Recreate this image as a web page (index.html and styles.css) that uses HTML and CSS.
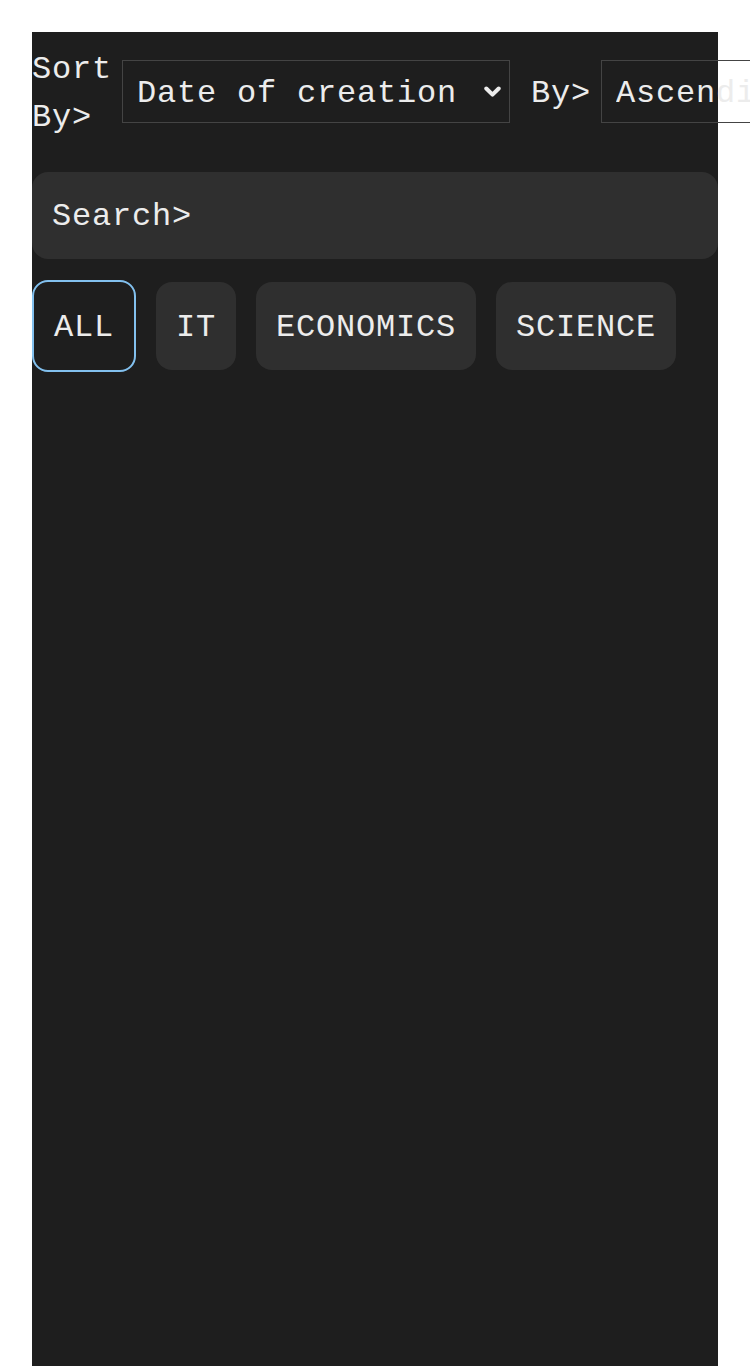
FILE: index.html
```html
<!DOCTYPE html>
<html lang="en">
<head>
<meta charset="utf-8">
<title>Notes</title>
<link rel="stylesheet" href="styles.css">
</head>
<body>
<main class="panel">
  <div class="sort-row">
    <label class="sort-label" for="sort-field">Sort By&gt;</label>
    <div class="select-box select-box--first">
      <select id="sort-field" class="select">
        <option>Date of creation</option>
        <option>Title</option>
      </select>
      <svg class="chevron" width="17" height="12" viewBox="0 0 17 12" aria-hidden="true">
        <path d="M2.3 2.5 L8.5 8.7 L14.7 2.5" fill="none" stroke="#ececec" stroke-width="4" stroke-linecap="round" stroke-linejoin="round"/>
      </svg>
    </div>
    <label class="sort-label" for="sort-order">By&gt;</label>
    <div class="select-box">
      <select id="sort-order" class="select">
        <option>Ascending</option>
        <option>Descending</option>
      </select>
      <svg class="chevron" width="17" height="12" viewBox="0 0 17 12" aria-hidden="true">
        <path d="M2.3 2.5 L8.5 8.7 L14.7 2.5" fill="none" stroke="#ececec" stroke-width="4" stroke-linecap="round" stroke-linejoin="round"/>
      </svg>
    </div>
  </div>

  <input class="search" type="text" placeholder="Search&gt;">

  <div class="chips">
    <button class="chip chip--active">ALL</button>
    <button class="chip">IT</button>
    <button class="chip">ECONOMICS</button>
    <button class="chip">SCIENCE</button>
  </div>
</main>
</body>
</html>
```

FILE: styles.css
```css
* {
  box-sizing: border-box;
}

html {
  overflow-x: hidden;
}

body {
  margin: 0;
  padding: 32px 32px 0;
  background: #ffffff;
  font-family: "Liberation Mono", "DejaVu Sans Mono", monospace;
  font-size: 32px;
  letter-spacing: 0.8px;
  color: #ececec;
}

.panel {
  background: #1e1e1e;
  min-height: calc(100vh - 32px);
  padding-top: 8px;
}

.sort-row {
  display: flex;
  align-items: center;
  gap: 10px;
}

.sort-label {
  line-height: 48px;
  padding-top: 6px;
  color: #ececec;
}

.select-box {
  display: flex;
  align-items: center;
  flex-shrink: 0;
  height: 63px;
  border: 1px solid #444444;
  padding: 0 8px 0 14px;
  gap: 26px;
}

.select-box--first {
  margin-right: 11px;
}

.select {
  appearance: none;
  -webkit-appearance: none;
  background: transparent;
  border: 0;
  outline: none;
  margin: 0;
  padding: 4px 0 0;
  font: inherit;
  letter-spacing: inherit;
  color: #ececec;
}

.chevron {
  display: block;
  flex-shrink: 0;
  margin-top: 2px;
}

.search {
  display: block;
  width: 100%;
  height: 87px;
  margin: 30px 0 0;
  padding: 2px 20px 0;
  border: 0;
  border-radius: 16px;
  background: #2f2f2f;
  font: inherit;
  letter-spacing: inherit;
  color: #ececec;
  outline: none;
}

.search::placeholder {
  color: #ececec;
  opacity: 1;
}

.chips {
  display: flex;
  align-items: center;
  gap: 20px;
  margin-top: 21px;
}

.chip {
  height: 88px;
  padding: 2px 20px 0;
  border: 0;
  border-radius: 16px;
  background: #2f2f2f;
  font: inherit;
  letter-spacing: inherit;
  color: #ececec;
}

.chip--active {
  height: 92px;
  border: 2px solid #82c0ee;
  background: #1e1e1e;
}
```
